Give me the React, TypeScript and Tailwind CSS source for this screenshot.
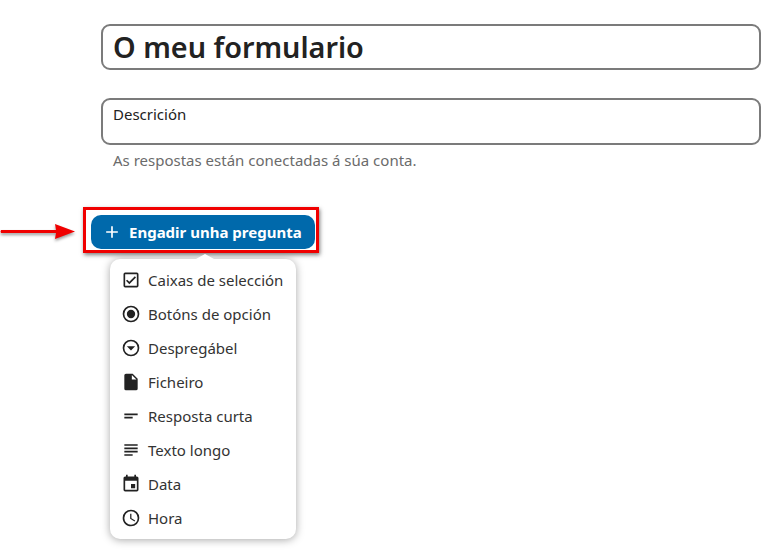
const menuItems = [
  {
    name: "Caixas de selección",
    d: "M19,3H5A2,2 0 0,0 3,5V19A2,2 0 0,0 5,21H19A2,2 0 0,0 21,19V5A2,2 0 0,0 19,3M19,5V19H5V5H19M10,17L6,13L7.41,11.58L10,14.17L16.59,7.58L18,9L10,17Z",
  },
  {
    name: "Botóns de opción",
    d: "M12,20A8,8 0 0,1 4,12A8,8 0 0,1 12,4A8,8 0 0,1 20,12A8,8 0 0,1 12,20M12,2A10,10 0 0,0 2,12A10,10 0 0,0 12,22A10,10 0 0,0 22,12A10,10 0 0,0 12,2M12,7A5,5 0 0,0 7,12A5,5 0 0,0 12,17A5,5 0 0,0 17,12A5,5 0 0,0 12,7Z",
  },
  {
    name: "Despregábel",
    d: "M12,20A8,8 0 0,1 4,12A8,8 0 0,1 12,4A8,8 0 0,1 20,12A8,8 0 0,1 12,20M12,2A10,10 0 0,0 2,12A10,10 0 0,0 12,22A10,10 0 0,0 22,12A10,10 0 0,0 12,2M7,10L12,15L17,10H7Z",
  },
  {
    name: "Ficheiro",
    d: "M13,9V3.5L18.5,9M6,2C4.89,2 4,2.89 4,4V20A2,2 0 0,0 6,22H18A2,2 0 0,0 20,20V8L14,2H6Z",
  },
  {
    name: "Resposta curta",
    d: "M4,9H20V11H4V9M4,13H14V15H4V13Z",
  },
  {
    name: "Texto longo",
    d: "M4,5H20V7H4V5M4,9H20V11H4V9M4,13H20V15H4V13M4,17H14V19H4V17Z",
  },
  {
    name: "Data",
    d: "M19,19H5V8H19M16,1V3H8V1H6V3H5C3.89,3 3,3.89 3,5V19A2,2 0 0,0 5,21H19A2,2 0 0,0 21,19V5C21,3.89 20.1,3 19,3H18V1M17,12H12V17H17V12Z",
  },
  {
    name: "Hora",
    d: "M12,20A8,8 0 0,0 20,12A8,8 0 0,0 12,4A8,8 0 0,0 4,12A8,8 0 0,0 12,20M12,2A10,10 0 0,1 22,12A10,10 0 0,1 12,22C6.47,22 2,17.5 2,12A10,10 0 0,1 12,2M12.5,7V12.25L17,14.92L16.25,16.15L11,13V7H12.5Z",
  },
];

export default function App() {
  return (
    <div className="relative w-[775px] h-[550px] overflow-hidden bg-white pt-6 pl-[101px] font-['Noto_Sans',sans-serif] text-[#222222]">
      {/* Title and description */}
      <div className="w-[660px] h-[46px] border-2 border-[#7b7b7b] rounded-[9px] pl-[10px] flex items-center">
        <span className="text-[28.8px] leading-none font-semibold">O meu formulario</span>
      </div>
      <div className="w-[660px] h-[47px] mt-7 border-2 border-[#7b7b7b] rounded-[9px] pl-[10px] pt-1">
        <span className="block text-[15px] leading-[20px]">Descrición</span>
      </div>
      <p className="mt-[5px] ml-3 text-[15px] leading-[20px] text-[#6b6b6b]">
        As respostas están conectadas á súa conta.
      </p>

      {/* Add question button, highlighted */}
      <div className="relative mt-[37px] -ml-[18px] w-[236px] h-[46px] border-[3px] border-[#f00000] shadow-[1px_2px_4px_rgba(0,0,0,0.5)] pl-[5px] pt-[5px]">
        <button className="w-[224px] h-[34px] rounded-[10px] bg-[#0069ab] text-white flex items-center pl-[11px] gap-[7px]">
          <svg className="w-5 h-5 shrink-0" viewBox="0 0 24 24" fill="currentColor">
            <path d="M19,13H13V19H11V13H5V11H11V5H13V11H19V13Z" />
          </svg>
          <span className="text-[15px] leading-none font-bold">Engadir unha pregunta</span>
        </button>
      </div>

      {/* Red arrow */}
      <svg className="absolute left-0 top-[220px]" width="80" height="26" viewBox="0 0 80 26">
        <path d="M1 10 L56 10 L55 4 L75 11.5 L55 19 L56 13 L1 13 Q0 11.5 1 10 Z" fill="#f00000" style={{ filter: "drop-shadow(0 2px 1.5px rgba(0,0,0,0.4))" }} />
      </svg>

      {/* Question type menu */}
      <div className="relative mt-[6px] ml-[9px] w-[186px] h-[280px] bg-white rounded-[10px] shadow-[0_1px_9px_rgba(0,0,0,0.35)] py-1">
        <div className="absolute -top-[5px] left-[86px] w-0 h-0 border-x-[9px] border-x-transparent border-b-[5px] border-b-white" />
        {menuItems.map((item) => (
          <div key={item.name} className="h-[34px] flex items-center pl-[11px] gap-[7px]">
            <svg className="w-5 h-5 shrink-0" viewBox="0 0 24 24" fill="#222222">
              <path d={item.d} />
            </svg>
            <span className="text-[15px] leading-[20px] text-[#333333]">{item.name}</span>
          </div>
        ))}
      </div>
    </div>
  );
}
